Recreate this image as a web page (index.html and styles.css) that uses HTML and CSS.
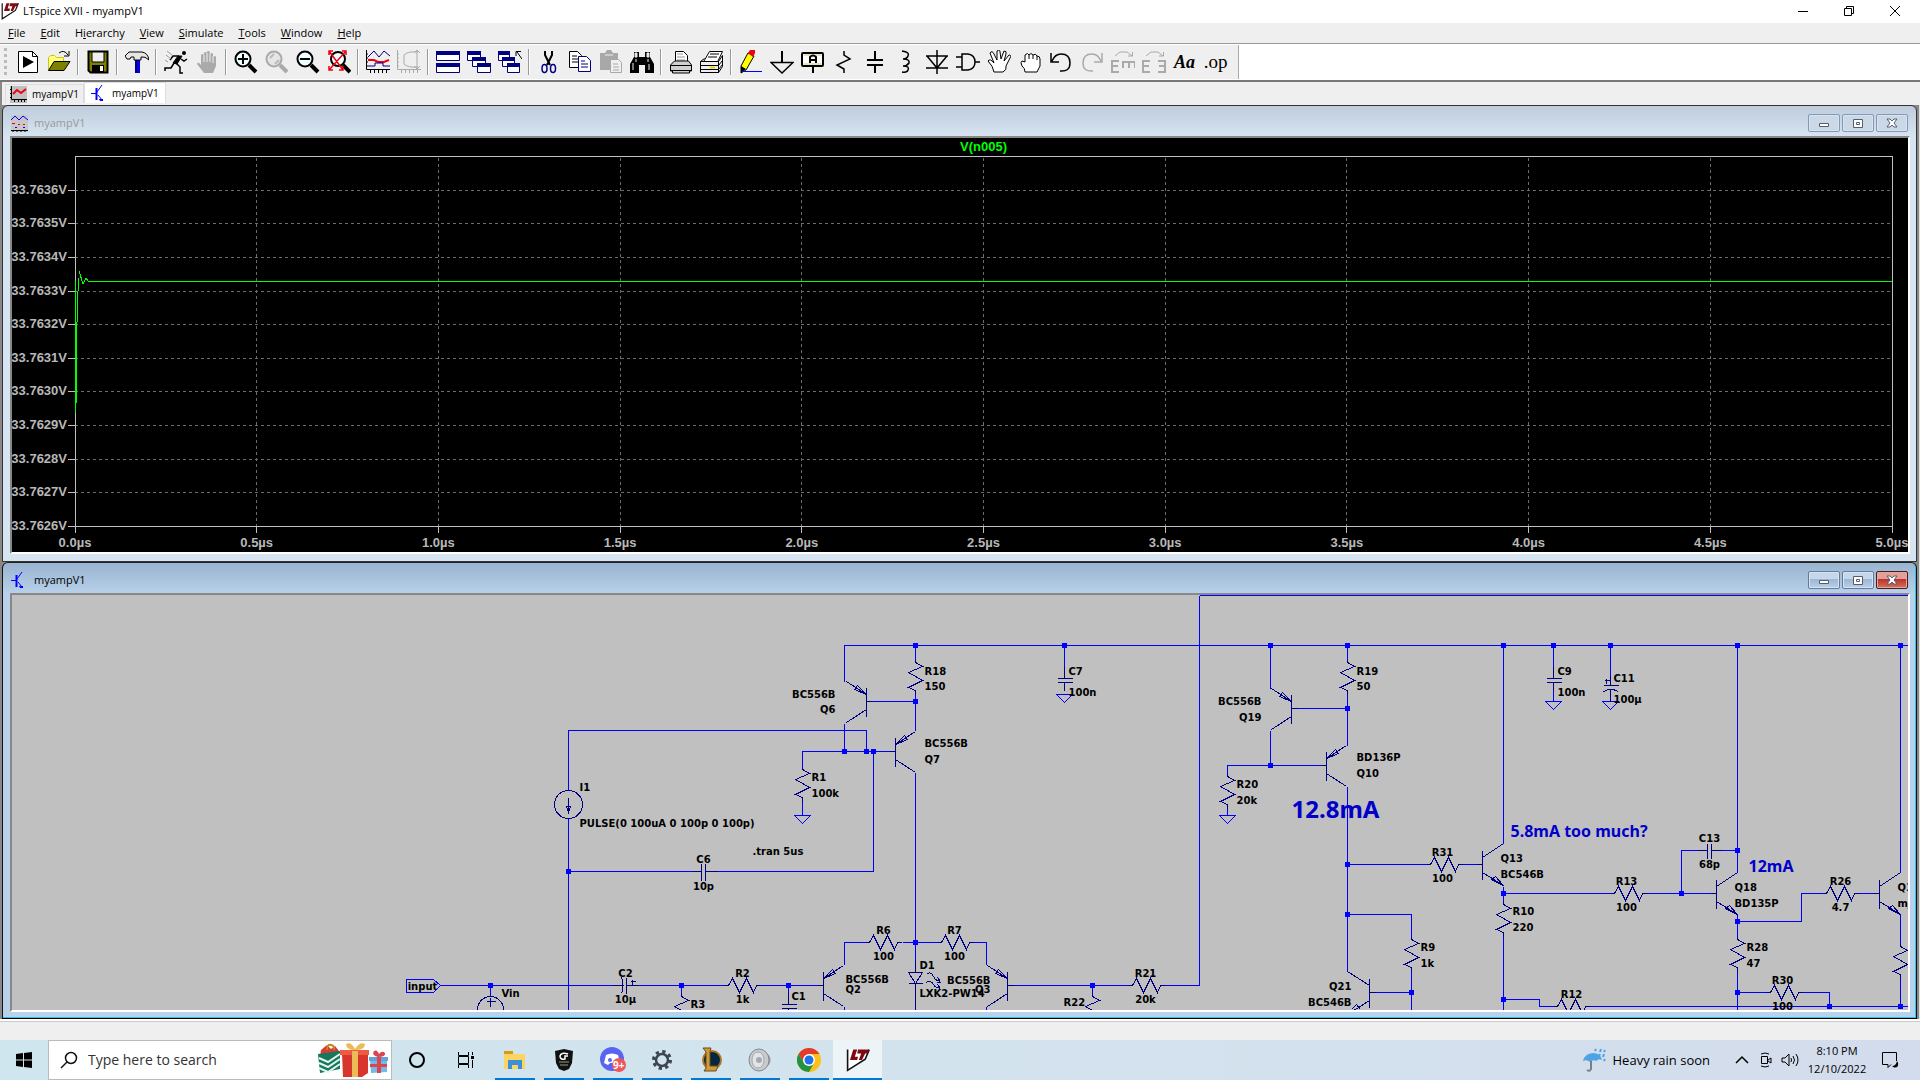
FILE: index.html
```html
<!DOCTYPE html>
<html lang="en">
<head>
<meta charset="utf-8">
<title>LTspice XVII - myampV1</title>
<link rel="stylesheet" href="styles.css">
</head>
<body>
<header class="titlebar">
  <svg class="logo" viewBox="0 0 30 30" width="18" height="20"><path d="M2 2V28L24 14 29 2" fill="#fff" stroke="#111" stroke-width="2"/><path d="M9 2h5l-3 9h4l-1 4H5zM15 2h14l-2 5h-3l-4 8h-4l3-8h-5z" fill="#7f0a10"/></svg>
  <h1>LTspice XVII - myampV1</h1>
  <div class="caption">
    <button aria-label="Minimize"><svg width="12" height="12"><path d="M1 6.500H11" stroke="#000"/></svg></button>
    <button aria-label="Restore"><svg width="12" height="12" fill="none" stroke="#000"><path d="M1.500 3.500h7v7h-7zM3.500 3V1.500h7v7H9"/></svg></button>
    <button aria-label="Close"><svg width="12" height="12"><path d="M1 1L11 11M11 1L1 11" stroke="#000"/></svg></button>
  </div>
</header>
<nav class="menu">
  <button><u>F</u>ile</button><button><u>E</u>dit</button><button>H<u>i</u>erarchy</button><button><u>V</u>iew</button><button><u>S</u>imulate</button><button><u>T</u>ools</button><button><u>W</u>indow</button><button><u>H</u>elp</button>
</nav>
<div class="toolrow">
<div class="toolbar">
  <span class="grip"></span>
  <button aria-label="Run"><svg viewBox="0 0 24 24"><path d="M2.500 1.500h14l5 5v16h-19z" fill="#fff" stroke="#000"/><path d="M16.500 1.500v5h5" fill="none" stroke="#000"/><path d="M7 6l11 6-11 6z"/></svg></button>
  <button aria-label="Open"><svg viewBox="0 0 24 24"><path d="M1.500 20V7.500l2-2h4l2 2h7V12" fill="#ffff80" stroke="#ccc600"/><path d="M1.500 20.500L7 11.500h16L17 20.500z" fill="#808000" stroke="#000"/><path d="M12 3q5-4 9 2M22 1v5h-5" fill="none" stroke="#000"/></svg></button>
  <i></i>
  <button aria-label="Save"><svg viewBox="0 0 24 24"><path d="M2.500 1.500h19v21h-17l-2-2z" fill="#808000" stroke="#000" stroke-width="2"/><path d="M6 2h12v10H6z" fill="#efefef" stroke="#000"/><path d="M6 15h12v7H6z"/><path d="M14 16h3v5h-3z" fill="#fff"/></svg></button>
  <i></i>
  <button aria-label="Control panel"><svg viewBox="0 0 24 24"><path d="M10 9h5v14h-5z" fill="#0000e0"/><path d="M10 9h2v14h-2z" fill="#000080"/><path d="M0 6l4-4h13q6 1 7 8-4-4-8-3v3H9V7H6l-1 2H2z" fill="#e6e6e6" stroke="#000"/></svg></button>
  <i></i>
  <button aria-label="Start simulation"><svg viewBox="0 0 24 24" fill="none" stroke="#000"><circle cx="20" cy="3" r="2" fill="#000" stroke="none"/><path d="M14 6l4 0-5 8-4-1z" fill="#000"/><path d="M15 6L9 6 6 10M17 9l3 2 3-2M12 13l4 4v6h3M10 13l-3 5H1v3" stroke-width="1.500"/><path d="M3 1l5 4M2 5l5 4M1 10l3 2" stroke="#999"/></svg></button>
  <button aria-label="Halt"><svg viewBox="0 0 24 24"><path d="M6 16V5q1-2 3 0V3q1-2 3 0V2q1-2 3 0v2q2-2 3 0v3q2-2 3 0v9l-3 7H9L2 14q1-3 4 1z" fill="#aaa"/><path d="M9 5v7M12 3v9M15 3v9M18 6v7" stroke="#efefef"/></svg></button>
  <i></i>
  <button aria-label="Zoom in"><svg viewBox="0 0 24 24"><circle cx="9" cy="9" r="7.500" fill="#eff" stroke="#000" stroke-width="2"/><path d="M15 15l7 7" stroke="#000" stroke-width="4"/><path d="M4 9h10M9 4v10" stroke="#000" stroke-width="2"/></svg></button>
  <button aria-label="Pan"><svg viewBox="0 0 24 24"><circle cx="9" cy="9" r="7.500" fill="#e6e6e6" stroke="#aaa" stroke-width="2"/><path d="M15 15l7 7" stroke="#aaa" stroke-width="4"/><path d="M5 8l4-4M14 10l-4 4" stroke="#bbb" stroke-width="2"/></svg></button>
  <button aria-label="Zoom out"><svg viewBox="0 0 24 24"><circle cx="9" cy="9" r="7.500" fill="#eff" stroke="#000" stroke-width="2"/><path d="M15 15l7 7" stroke="#000" stroke-width="4"/><path d="M4 9h10" stroke="#000" stroke-width="2"/></svg></button>
  <button aria-label="Zoom to fit"><svg viewBox="0 0 24 24"><circle cx="11" cy="9" r="7" fill="#eff" stroke="#000" stroke-width="2"/><path d="M16 15l7 7" stroke="#000" stroke-width="4"/><path d="M2 1L16 20M19 1L2 20M2 5V1h4M15 1h4v4M2 16v4h4M12 20h4v-4" fill="none" stroke="#f00010" stroke-width="1.500"/></svg></button>
  <i></i>
  <button aria-label="Autorange"><svg viewBox="0 0 24 24" fill="none"><path d="M.5 0V19.500H24M4.500 19v4M8.500 19v4M12.500 19v4M16.500 19v4M20.500 19v4M0 4h2M0 8h2M0 12h2M0 16h2" stroke="#000"/><path d="M2 7l6-6 5 6 5-6 6 5" stroke="#000080"/><path d="M2 10h6l4 2h6l5-2" stroke="#f00010" stroke-width="2"/><path d="M2 16h7v-3h8v3h7" stroke="#000080"/></svg></button>
  <button aria-label="Plot settings"><svg viewBox="0 0 24 24" fill="none" stroke="#aaa"><path d="M.5 0V19.500H24M4.500 19v4M8.500 19v4M12.500 19v4M16.500 19v4M20.500 19v4M0 4h2M0 8h2M0 12h2M0 16h2M7 5q4-4 14-3M7 14q4 4 14 3M7 5v9M20 0v19M17 3l3-3 3 3M17 16l3 3 3-3"/></svg></button>
  <i></i>
  <button aria-label="Tile windows"><svg viewBox="0 0 24 24"><path d="M.5 1.500h23v9H.5zM.5 13.500h23v9H.5z" fill="#fff" stroke="#000080"/><path d="M0 1h24v4H0zM0 13h24v4H0z" fill="#000080"/></svg></button>
  <button aria-label="Cascade windows"><svg viewBox="0 0 24 24"><g fill="#fff" stroke="#000080"><path d="M.5 1.500h13v9H.5z"/><path d="M5.500 7.500h13v9h-13z"/><path d="M10.500 13.500h13v9h-13z"/></g><path d="M0 1h14v4H0zM5 7h14v4H5zM10 13h14v4H10z" fill="#000080"/></svg></button>
  <button aria-label="Close all windows"><svg viewBox="0 0 24 24"><g fill="#fff" stroke="#000080"><path d="M.5 1.500h11v9H.5z"/><path d="M4.500 7.500h12v9h-12z"/><path d="M9.500 13.500h12v9h-12z"/></g><path d="M0 1h12v4H0zM4 7h13v4H4zM9 13h13v4H9z" fill="#000080"/><path d="M24 9l-5-7M18 6V1.500h5" fill="none" stroke="#000"/></svg></button>
  <i></i>
  <button aria-label="Cut"><svg viewBox="0 0 24 24" fill="none"><path d="M8 1v4l5 10M15 1v4l-5 10" stroke="#000" stroke-width="2"/><ellipse cx="7.500" cy="18.500" rx="2.500" ry="4" stroke="#000080" stroke-width="1.500"/><ellipse cx="16" cy="18.500" rx="2.500" ry="4" stroke="#000080" stroke-width="1.500"/></svg></button>
  <button aria-label="Copy"><svg viewBox="0 0 24 24" fill="#fff"><path d="M1.500 1.500h8l4 4v12h-12z" stroke="#000"/><path d="M4 6h5M4 9h7M4 12h7" stroke="#000"/><path d="M10.500 6.500h8l4 4v11h-12z" stroke="#000080"/><path d="M13 11h4M13 14h7M13 17h7" stroke="#000080"/></svg></button>
  <button aria-label="Paste"><svg viewBox="0 0 24 24"><path d="M1 3h5l2-3h4l2 3h5v17H1z" fill="#a8a8a8"/><path d="M6 5h8" stroke="#efefef"/><path d="M11.500 9.500h8l3 3v10h-11z" fill="#efefef" stroke="#a8a8a8"/><path d="M14 14h5M14 17h6M14 20h6" stroke="#a8a8a8"/></svg></button>
  <button aria-label="Find"><svg viewBox="0 0 24 24"><path d="M4 2h5v5h6V2h5v5l4 7v9h-9v-8h-6v8H0v-9l4-7z"/><path d="M5 3h2v4H5zM17 3h2v4h-2zM3 13v7M6 9v3M18 9v3M19 14v6" fill="#ddd" stroke="#eee"/></svg></button>
  <i></i>
  <button aria-label="Print"><svg viewBox="0 0 24 24" stroke="#000"><path d="M6.500 12V1.500h8l4 4V12" fill="#fff"/><path d="M8 4h6M8 7h8M8 10h8" stroke="#999"/><path d="M1.500 15l4-4h14l3 4v6h-2v2h-17v-2h-2z" fill="#d0d0d0"/><path d="M1 15.500h22M1 20.500h22"/></svg></button>
  <button aria-label="Print setup"><svg viewBox="0 0 24 24" stroke="#000"><path d="M4 11L9.500 1.500h13L18 11" fill="#fff"/><path d="M10 4h9M8 7h9"/><path d="M.5 11.500h18v11H.5zM18.500 11.500l4-6v11l-4 6zM.5 11.500l4-3M.5 15.500h18l4-5M.5 19.500h18l4-5" fill="#eee"/><path d="M10 17.500h5" stroke="#e5d500" stroke-width="2"/></svg></button>
  <i></i>
  <button aria-label="Draw wire"><svg viewBox="0 0 24 24"><path d="M9 3l6 3-8 14-5 3V16z" fill="#ff0" stroke="#000"/><path d="M9 3l2-3h5v3l-2 4z" fill="#f00010"/><path d="M2 16l5 3-5 4z"/><path d="M3 21.500h20" stroke="#00f"/></svg></button>
  <button aria-label="Ground"><svg viewBox="0 0 24 24" fill="none" stroke="#000"><path d="M12 1v11" stroke-width="2"/><path d="M1 12.500h22L12 23z" stroke-width="1.500"/></svg></button>
  <button aria-label="Label net"><svg viewBox="0 0 24 24"><rect x="1" y="3" width="21" height="13" rx="1" fill="#fff" stroke="#000" stroke-width="2"/><path d="M2.500 5h18M2.500 14h18" stroke="#d0c870"/><path d="M12 17v6M9 13V7q3-3 6 0v6M9 10h6" fill="none" stroke="#000" stroke-width="2"/></svg></button>
  <button aria-label="Resistor"><svg viewBox="0 0 24 24" fill="none" stroke="#000" stroke-width="1.500"><path d="M12 1v4l6 4L5 15l7 4v4"/></svg></button>
  <button aria-label="Capacitor"><svg viewBox="0 0 24 24" fill="none" stroke="#000" stroke-width="2"><path d="M12 1v9M4 10h16M4 15h16M12 15v8"/></svg></button>
  <button aria-label="Inductor"><svg viewBox="0 0 24 24" fill="none" stroke="#000" stroke-width="1.500"><path d="M8 1q8 1 6 5-1 3-5 3 7 0 6 4-2 3-6 3 7 0 5 4-1 3-6 2"/></svg></button>
  <button aria-label="Diode"><svg viewBox="0 0 24 24" fill="none" stroke="#000" stroke-width="1.500"><path d="M12 0v24M1 6h22M1 18h22M2 6l10 12L22 6"/></svg></button>
  <button aria-label="Component"><svg viewBox="0 0 24 24" fill="none" stroke="#000" stroke-width="1.500"><path d="M6 4h6q7 1 7 8t-7 8H6zM0 7h6M0 17h6M19 12h5"/></svg></button>
  <button aria-label="Move"><svg viewBox="0 0 24 24"><path d="M7 22q-1-6-6-11 2-3 6 2L3 3q2-3 4 1l3 6V1q3-2 3 1l1 7 3-8q3 0 2 3l-2 7 5-6q3 0 1 3l-4 8q1 4-3 6z" fill="#fff" stroke="#000"/></svg></button>
  <button aria-label="Drag"><svg viewBox="0 0 24 24"><path d="M7 22q0-4-3-6-2-4 0-5l3 1V5q3-3 4 0 2-3 4 0 3-2 4 1 3 0 3 3v7l-3 6z" fill="#fff" stroke="#000"/><path d="M11 5v4M15 5v4M19 6v4" stroke="#000"/></svg></button>
  <button aria-label="Undo"><svg viewBox="0 0 24 24" fill="none" stroke="#000" stroke-width="1.500"><path d="M2 3v9h8M3 11Q6 4 12 4q9 0 9 9t-10 8"/></svg></button>
  <button aria-label="Redo"><svg viewBox="0 0 24 24" fill="none" stroke="#aaa" stroke-width="1.500"><path d="M22 3v9h-8M21 11Q18 4 12 4q-9 0-9 9t10 8"/></svg></button>
  <button aria-label="Mirror"><svg viewBox="0 0 24 24" fill="none" stroke="#aaa"><path d="M4 6l5-4h7l5 4M17 6h4.500V2"/><path d="M8 11H1v11h7M1 16h6M12 18v-6h12v6M18 12v6" stroke-width="2"/></svg></button>
  <button aria-label="Rotate"><svg viewBox="0 0 24 24" fill="none" stroke="#aaa"><path d="M4 6l5-4h7l5 4M17 6h4.500V2"/><path d="M8 11H1v11h7M1 16h6M16 11h7v11h-7M17 16h6" stroke-width="2"/></svg></button>
  <button class="aa">Aa</button>
  <button class="op">.op</button>
</div>
</div>
<div class="tabs" role="tablist">
  <button role="tab"><svg width="17" height="17" viewBox="0 0 17 17"><path d="M0 0h17v17H0z" fill="#c0c0c0"/><path d="M1.500 0v13.500h15.500M0 3.500h2M0 7.500h2M0 11.500h2M4.500 13v3M8.500 13v3M11.500 13v3M14.500 13v3" fill="none" stroke="#000"/><path d="M3 8l4-4 4 3 5-4" fill="none" stroke="#f00010" stroke-width="2"/></svg>myampV1</button>
  <button role="tab" class="active" aria-selected="true"><svg width="17" height="17" viewBox="0 0 17 17" fill="none" stroke="#00f"><path d="M0 8.500h5M6 7l5-7M7 10l4 5"/><path d="M5.500 3v12" stroke-width="2"/><path d="M8 14h4v2h-3z" fill="#00f" stroke="none"/></svg>myampV1</button>
</div>
<main class="mdi">
  <section class="child inactive">
    <div class="child-title">
      <svg width="17" height="17" viewBox="0 0 17 17" fill="none"><path d="M0 0h17v17H0z" fill="#c8c8c8"/><path d="M0 5l4-4 4 4 4-4 5 4" stroke="#00f"/><path d="M1 8.500h3M7 9.500h2M12 9.500h2" stroke="#f00010"/><path d="M4 12.500h2M12 12.500h2" stroke="#00f"/><path d="M0 15.500h17M2 15v2M6 15v2M10 15v2M14 15v2" stroke="#000"/></svg>
      <h2>myampV1</h2>
      <button aria-label="Minimize"><svg width="12" height="10"><path d="M1.500 5.500h9v3h-9z" fill="#fff" stroke="#555c70"/></svg></button>
      <button aria-label="Restore"><svg width="12" height="10"><path d="M1.500 1.500h9v8h-9z" fill="#fff" stroke="#555c70"/><path d="M4.500 4.500h3v2h-3z" fill="none" stroke="#555c70"/></svg></button>
      <button aria-label="Close"><svg width="12" height="10"><path d="M1 1h3l2 2 2-2h3L8 5l3 4H8L6 7 4 9H1l3-4z" fill="#fff" stroke="#555c70"/></svg></button>
    </div>
    <div class="client plot">
      <svg class="chart" role="img" aria-label="V(n005) against time">
        <g class="grid">
          <line x1="10%" x2="10%" y1="2" y2="370"/><line x1="20%" x2="20%" y1="2" y2="370"/><line x1="30%" x2="30%" y1="2" y2="370"/><line x1="40%" x2="40%" y1="2" y2="370"/><line x1="50%" x2="50%" y1="2" y2="370"/><line x1="60%" x2="60%" y1="2" y2="370"/><line x1="70%" x2="70%" y1="2" y2="370"/><line x1="80%" x2="80%" y1="2" y2="370"/><line x1="90%" x2="90%" y1="2" y2="370"/>
          <line x2="100%" y1="34" y2="34"/><line x2="100%" y1="67" y2="67"/><line x2="100%" y1="101" y2="101"/><line x2="100%" y1="135" y2="135"/><line x2="100%" y1="168" y2="168"/><line x2="100%" y1="202" y2="202"/><line x2="100%" y1="235" y2="235"/><line x2="100%" y1="269" y2="269"/><line x2="100%" y1="303" y2="303"/><line x2="100%" y1="336" y2="336"/>
        </g>
        <g class="axes">
          <rect width="100%" height="370"/>
          <path d="M-7 34H0M-7 67H0M-7 101H0M-7 135H0M-7 168H0M-7 202H0M-7 235H0M-7 269H0M-7 303H0M-7 336H0M-7 370H0"/>
          <line x1="0" x2="0" y1="370" y2="377"/><line x1="10%" x2="10%" y1="370" y2="377"/><line x1="20%" x2="20%" y1="370" y2="377"/><line x1="30%" x2="30%" y1="370" y2="377"/><line x1="40%" x2="40%" y1="370" y2="377"/><line x1="50%" x2="50%" y1="370" y2="377"/><line x1="60%" x2="60%" y1="370" y2="377"/><line x1="70%" x2="70%" y1="370" y2="377"/><line x1="80%" x2="80%" y1="370" y2="377"/><line x1="90%" x2="90%" y1="370" y2="377"/><line x1="100%" x2="100%" y1="370" y2="377"/>
        </g>
        <g class="trace"><path d="M0 125V257M1 166V247M2 135V166M3 122V135M4 115L8 128 11 122 13 125"/><line x1="13" x2="100%" y1="125" y2="125"/></g>
        <g class="ylab"><text x="-8" y="38">33.7636V</text><text x="-8" y="71">33.7635V</text><text x="-8" y="105">33.7634V</text><text x="-8" y="139">33.7633V</text><text x="-8" y="172">33.7632V</text><text x="-8" y="206">33.7631V</text><text x="-8" y="239">33.7630V</text><text x="-8" y="273">33.7629V</text><text x="-8" y="307">33.7628V</text><text x="-8" y="340">33.7627V</text><text x="-8" y="374">33.7626V</text></g>
        <g class="xlab"><text x="0" y="391">0.0µs</text><text x="10%" y="391">0.5µs</text><text x="20%" y="391">1.0µs</text><text x="30%" y="391">1.5µs</text><text x="40%" y="391">2.0µs</text><text x="50%" y="391">2.5µs</text><text x="60%" y="391">3.0µs</text><text x="70%" y="391">3.5µs</text><text x="80%" y="391">4.0µs</text><text x="90%" y="391">4.5µs</text><text x="100%" y="391">5.0µs</text><text class="name" x="50%" y="-5">V(n005)</text></g>
      </svg>
    </div>
  </section>
  <section class="child current">
    <div class="child-title">
      <svg width="17" height="17" viewBox="0 0 17 17" fill="none" stroke="#00f"><path d="M0 8.500h5M6 7l5-7M7 10l4 5"/><path d="M5.500 3v12" stroke-width="2"/><path d="M8 14h4v2h-3z" fill="#00f" stroke="none"/></svg>
      <h2>myampV1</h2>
      <button aria-label="Minimize"><svg width="12" height="10"><path d="M1.500 5.500h9v3h-9z" fill="#fff" stroke="#555c70"/></svg></button>
      <button aria-label="Restore"><svg width="12" height="10"><path d="M1.500 1.500h9v8h-9z" fill="#fff" stroke="#555c70"/><path d="M4.500 4.500h3v2h-3z" fill="none" stroke="#555c70"/></svg></button>
      <button class="close" aria-label="Close"><svg width="12" height="10"><path d="M1 1h3l2 2 2-2h3L8 5l3 4H8L6 7 4 9H1l3-4z" fill="#fff" stroke="#555c70"/></svg></button>
    </div>
    <div class="client sheet">
      <svg class="schematic" width="1920" height="430" viewBox="11.500 594.500 1920 430" role="img" aria-label="Amplifier schematic">
        <defs>
          <path id="rv" d="M0-3V0L7 4-7 10 7 18-7 25 0 28V32"/>
          <path id="rh" d="M-4 0H0L4-7 11 7 18-7 25 7 28 0H32"/>
          <path id="pnp" d="M-6 0H0M0-14V15M20-20L0-7 9-16 12-12 0-7M0 8L20 21"/>
          <path id="npn" d="M-6 0H0M0-14V15M21-21L0-7M0 8L21 21 9 15 13 12 21 21"/>
          <path id="cap" d="M0-12V0M-7 0H8M-7 4H8M0 4V12"/>
          <path id="gnd" d="M-8 0H8L0 8Z"/>
          <path id="dot" d="M-2.500-2.500h5v5h-5z"/>
        </defs>
        <g class="wire">
          <path d="M1199 595H2600M1199 595V985H1164M844 681V645H2600M915 645V660M915 692V730M915 701H872M844 723V751M802 766V751H889M866 751V730H568V789M568 818V1100M568 871H691M717 871H873V751M802 800V815M915 772V960M869 942H844V964M902 942H937M973 942H986V964M440 985H612M636 985H724M760 985H817M490 985V996M681 985V993M788 985V995M1013 985H1128M1092 985V993M1064 645V666M1270 645V688M1270 730V765M1227 773V765H1320M1227 807V815M1347 645V659M1347 694V745M1297 708H1347M1347 786V971M1347 864H1426M1462 864H1476M1347 914H1411V936M1411 971V1100M1375 992H1411M1503 645V843M1503 886V901M1503 893H1610M1646 893H1710M1503 936V1100M1503 999H1539V1006H1553M1589 1006H2600M1553 645V666M1553 690V701M1610 645V675M1737 645V872M1681 893V850H1697M1721 850H1737M1737 914V936M1737 971V1100M1737 921H1801V893H1822M1858 893H1873M1900 645V872M1900 914V943M1900 978V1006M1737 992H1766M1802 992H1829V1006M844 1006V1020M986 1006V1020"/>
          <path d="M406 979H433L440 985 433 992H406Z"/>
          <use href="#gnd" x="802" y="815"/><use href="#gnd" x="1064" y="694"/><use href="#gnd" x="1227" y="815"/><use href="#gnd" x="1553" y="701"/><use href="#gnd" x="1610" y="701"/>
        </g>
        <g class="part">
          <use href="#rv" x="915" y="662"/><use href="#rv" x="802" y="769"/><use href="#rv" x="681" y="996"/><use href="#rv" x="1092" y="996"/><use href="#rv" x="1227" y="776"/><use href="#rv" x="1347" y="662"/><use href="#rv" x="1411" y="939"/><use href="#rv" x="1503" y="904"/><use href="#rv" x="1737" y="939"/><use href="#rv" x="1900" y="946"/>
          <use href="#rh" x="869" y="942"/><use href="#rh" x="941" y="942"/><use href="#rh" x="728" y="985"/><use href="#rh" x="1132" y="985"/><use href="#rh" x="1430" y="864"/><use href="#rh" x="1614" y="893"/><use href="#rh" x="1826" y="893"/><use href="#rh" x="1770" y="992"/><use href="#rh" x="1557" y="1006"/>
          <use href="#pnp" x="895" y="751"/><use href="#pnp" x="823" y="985"/><use href="#pnp" x="1326" y="765"/>
          <use href="#pnp" transform="translate(866 701) scale(-1 1)"/><use href="#pnp" transform="translate(1007 985) scale(-1 1)"/><use href="#pnp" transform="translate(1291 708) scale(-1 1)"/>
          <use href="#npn" x="1482" y="864"/><use href="#npn" x="1716" y="893"/><use href="#npn" x="1879" y="893"/>
          <path d="M1375 992H1369M1369 978V1007M1347 971L1369 985M1369 1000L1347 1014M1351 1009L1356 1004 1360 1009"/>
          <use href="#cap" x="1064" y="678"/><use href="#cap" x="1553" y="678"/><use href="#cap" x="788" y="1004"/>
          <path d="M1610 675V685M1603 685H1618M1603 691Q1610 687 1618 691M1610 689V701M1606 678V683M1604 680H1609"/>
          <path d="M691 871H701M701 863V880M705 863V880M705 871H717M1697 850H1707M1707 843V858M1711 843V858M1711 850H1721"/>
          <path d="M612 985H623M621 977Q624 985 621 993M626 977V993M626 985H638M632 979V984M630 981H635"/>
          <circle cx="568" cy="804" r="14"/><path d="M568 797V812M566 806H570L568 812Z"/>
          <circle cx="490" cy="1009" r="13"/><path d="M490 997V1006M486 1001H495"/>
          <path d="M915 960V972M908 972H922L915 983ZM908 983H922M915 983V1020M926 974Q930 970 933 976T940 979M937 977L940 982 936 982M926 982Q930 979 933 984T940 986M937 984L940 989"/>
        </g>
        <g class="dots">
          <use href="#dot" x="915" y="645"/><use href="#dot" x="1064" y="645"/><use href="#dot" x="1270" y="645"/><use href="#dot" x="1347" y="645"/><use href="#dot" x="1503" y="645"/><use href="#dot" x="1553" y="645"/><use href="#dot" x="1610" y="645"/><use href="#dot" x="1737" y="645"/><use href="#dot" x="1900" y="645"/><use href="#dot" x="915" y="701"/><use href="#dot" x="844" y="751"/><use href="#dot" x="866" y="751"/><use href="#dot" x="873" y="751"/><use href="#dot" x="568" y="871"/><use href="#dot" x="915" y="942"/><use href="#dot" x="490" y="985"/><use href="#dot" x="681" y="985"/><use href="#dot" x="788" y="985"/><use href="#dot" x="1092" y="985"/><use href="#dot" x="1270" y="765"/><use href="#dot" x="1347" y="708"/><use href="#dot" x="1347" y="864"/><use href="#dot" x="1347" y="914"/><use href="#dot" x="1411" y="992"/><use href="#dot" x="1503" y="893"/><use href="#dot" x="1503" y="999"/><use href="#dot" x="1681" y="893"/><use href="#dot" x="1737" y="850"/><use href="#dot" x="1737" y="921"/><use href="#dot" x="1737" y="992"/><use href="#dot" x="1829" y="1006"/><use href="#dot" x="1900" y="1006"/>
        </g>
        <g class="label">
          <text x="924" y="674">R18</text><text x="924" y="689">150</text><text x="924" y="746">BC556B</text><text x="924" y="762">Q7</text><text x="811" y="780">R1</text><text x="811" y="796">100k</text><text x="579" y="790">I1</text><text x="579" y="826">PULSE(0 100uA 0 100p 0 100p)</text><text x="752" y="854">.tran 5us</text><text x="919" y="968">D1</text><text x="845" y="982">BC556B</text><text x="845" y="992">Q2</text><text x="919" y="996">LXK2-PW14</text><text x="1068" y="674">C7</text><text x="1068" y="695">100n</text><text x="1063" y="1005">R22</text><text x="791" y="999">C1</text><text x="690" y="1007">R3</text><text x="501" y="996">Vin</text><text x="1236" y="787">R20</text><text x="1236" y="803">20k</text><text x="1356" y="674">R19</text><text x="1356" y="689">50</text><text x="1356" y="760">BD136P</text><text x="1356" y="776">Q10</text><text x="1500" y="861">Q13</text><text x="1500" y="877">BC546B</text><text x="1512" y="914">R10</text><text x="1512" y="930">220</text><text x="1420" y="950">R9</text><text x="1420" y="966">1k</text><text x="1557" y="674">C9</text><text x="1557" y="695">100n</text><text x="1613" y="681">C11</text><text x="1613" y="702">100µ</text><text x="1734" y="890">Q18</text><text x="1734" y="906">BD135P</text><text x="1897" y="890">Q19</text><text x="1897" y="906">mjl</text><text x="1746" y="950">R28</text><text x="1746" y="966">47</text>
        </g>
        <g class="label end">
          <text x="835" y="697">BC556B</text><text x="835" y="712">Q6</text><text x="990" y="983">BC556B</text><text x="990" y="992">Q3</text><text x="1261" y="704">BC556B</text><text x="1261" y="720">Q19</text><text x="1351" y="989">Q21</text><text x="1351" y="1005">BC546B</text>
        </g>
        <g class="label mid">
          <text x="703" y="862">C6</text><text x="703" y="889">10p</text><text x="883" y="933">R6</text><text x="883" y="959">100</text><text x="954" y="933">R7</text><text x="954" y="959">100</text><text x="625" y="976">C2</text><text x="625" y="1002">10µ</text><text x="742" y="976">R2</text><text x="742" y="1002">1k</text><text x="422" y="989">input</text><text x="1145" y="976">R21</text><text x="1145" y="1002">20k</text><text x="1442" y="855">R31</text><text x="1442" y="881">100</text><text x="1571" y="997">R12</text><text x="1626" y="884">R13</text><text x="1626" y="910">100</text><text x="1709" y="841">C13</text><text x="1709" y="867">68p</text><text x="1840" y="884">R26</text><text x="1840" y="910">4.7</text><text x="1782" y="983">R30</text><text x="1782" y="1009">100</text>
        </g>
        <g class="note"><text class="big" x="1291" y="817">12.8mA</text><text x="1510" y="836">5.8mA too much?</text><text x="1748" y="871">12mA</text></g>
      </svg>
    </div>
  </section>
</main>
<div class="status"></div>
<footer class="taskbar">
  <button class="start" aria-label="Start"><svg width="16" height="16"><path d="M0 2l7-1v6.500H0zM8 1l8-1v7.500H8zM0 8.500h7V15l-7-1zM8 8.500h8V16l-8-1z"/></svg></button>
  <label class="search">
    <svg width="18" height="18" fill="none" stroke="#111" stroke-width="1.500"><circle cx="11" cy="7" r="5.500"/><path d="M7 11L1 17"/></svg>
    <input type="text" placeholder="Type here to search" aria-label="Search">
    <svg class="gifts" width="70" height="36" viewBox="0 0 70 36"><path d="M3 8l6-5 4 4 4-3 4 5v6H2z" fill="#d93a35"/><path d="M0 12l22-3v18L2 31z" fill="#15785c"/><path d="M1 16l9 4 12-8M1 21l9 4 12-8M1 26l9 4 12-8" fill="none" stroke="#e8f4ee" stroke-width="2"/><path d="M9 8q0-6 4-5 4 1 3 5" fill="none" stroke="#b98b20" stroke-width="2"/><path d="M24 11h26v20l-6 4H25z" fill="#d8352d"/><path d="M22 8h29v5H22z" fill="#ef5a42"/><path d="M34 9h6v26h-6zM37 8q-9 0-9-6 5-3 9 5 5-8 10-5 0 6-10 6z" fill="#edbb55"/><path d="M52 17h17v13l-16 1z" fill="#76b9e6"/><path d="M51 15h19v4H51z" fill="#5fa5d8"/><path d="M59 15h4v16h-4zM52 22h17v3H52zM60 15q-7-2-4-6 3-2 5 3 3-4 6-1 1 4-7 4z" fill="#d94550"/></svg>
  </label>
  <button aria-label="Cortana"><svg width="18" height="18"><circle cx="9" cy="9" r="7" fill="none" stroke="#000" stroke-width="2"/></svg></button>
  <button aria-label="Task view"><svg width="18" height="18" fill="none" stroke="#000"><path d="M1.500 1v3.500h10V1M1.500 17v-3.500h10V17M1.500 5.500h10v7h-10zM15.500 1v3M15.500 9v8"/><path d="M14 5h3v3h-3z" fill="#000" stroke="none"/></svg></button>
  <button class="run" aria-label="File Explorer"><svg width="24" height="24"><path d="M1 3h8l2 3h11v15H1z" fill="#fcd462"/><path d="M1 3h9v3H1z" fill="#d99a18"/><path d="M5 12h14v9h-4v-4H9v4H5z" fill="#3d8fd8"/></svg></button>
  <button class="run" aria-label="G Hub"><svg width="24" height="24"><path d="M3 3l9-2 9 2-1 12-3 6-5 2-5-2-3-6z" fill="#111"/><path d="M16 6q-7-2-8 2 0 4 5 3V8h3" fill="none" stroke="#fff" stroke-width="1.500"/><path d="M7 14h10M8 17h8" stroke="#998"/></svg></button>
  <button class="run" aria-label="Discord, 9+ notifications"><svg width="28" height="28"><circle cx="13" cy="13" r="12" fill="#5865f2"/><path d="M7 9q6-3 12 0l2 8-4 2-2-2h-4l-2 2-4-2z" fill="#fff"/><circle cx="11" cy="14" r="2" fill="#5865f2"/><circle cx="20" cy="19" r="7" fill="#f0545c"/><text x="14" y="23" class="badge">9+</text></svg></button>
  <button class="run" aria-label="Settings"><svg width="22" height="22" fill="none" stroke="#3b4450"><circle cx="11" cy="11" r="6" stroke-width="2.500"/><circle cx="11" cy="11" r="8.500" stroke-width="3" stroke-dasharray="3.300 3.370"/></svg></button>
  <button class="run" aria-label="League of Legends"><svg width="26" height="26"><circle cx="14" cy="13" r="9" fill="#06283d" stroke="#a9772c" stroke-width="2"/><path d="M5 1h8l-1 3v15h8l-2 5H6l2-3V5z" fill="#d09a3b" stroke="#6b4a1a"/></svg></button>
  <button class="run" aria-label="Sound mixer"><svg width="24" height="24"><path d="M12 1l9 6q3 5 0 10l-9 6z" fill="#999ea5"/><ellipse cx="11" cy="12" rx="10" ry="11" fill="#c6cbd0" stroke="#888"/><ellipse cx="10" cy="12" rx="6" ry="8" fill="#e2e5e8" stroke="#aaa"/><circle cx="11" cy="12" r="3" fill="#a4aab0"/></svg></button>
  <button class="run" aria-label="Chrome"><svg width="24" height="24"><circle cx="12" cy="12" r="12" fill="#fbc116"/><path d="M12 6h10.400A12 12 0 001.600 6L7 15z" fill="#e33b2e"/><path d="M1.600 6L7 15 12 18l5-3-5 9A12 12 0 011.600 6z" fill="#229342"/><circle cx="12" cy="12" r="6" fill="#fff"/><circle cx="12" cy="12" r="4.500" fill="#1a73e8"/></svg></button>
  <button class="run on" aria-label="LTspice"><svg viewBox="0 0 30 30" width="24" height="26"><path d="M2 2V28L24 14 29 2" fill="#fff" stroke="#111" stroke-width="2"/><path d="M9 2h5l-3 9h4l-1 4H5zM15 2h14l-2 5h-3l-4 8h-4l3-8h-5z" fill="#7f0a10"/></svg></button>
  <div class="tray">
    <button class="weather"><svg width="24" height="24"><path d="M1 13q2-8 11-8 7 1 8 7-3-2-6 1-3-2-6 1-3-3-7-1z" fill="#4da3e6"/><path d="M9 13v8q-1 3-4 1" fill="none" stroke="#777f88" stroke-width="2"/><path d="M14 1l-1 2M19 1l-1 3M23 2l-1 2M18 6l-1 2M22 6l-1 3M23 11l-1 2" stroke="#4da3e6" stroke-width="2"/></svg>Heavy rain soon</button>
    <button aria-label="Hidden icons"><svg width="14" height="14" fill="none" stroke="#000" stroke-width="1.500"><path d="M1 10l6-6 6 6"/></svg></button>
    <button aria-label="Meet now"><svg width="14" height="16" fill="none" stroke="#000"><path d="M2.500 4.500h6v7h-6zM9 8l3-2v5l-3-2M2 2q4-2 8 0M2 14q4 2 8 0"/></svg></button>
    <button aria-label="Volume"><svg width="18" height="16" fill="none" stroke="#000"><path d="M1 6h3l4-4v12l-4-4H1zM10 6q1 2 0 4M12 4q3 4 0 8M15 2q4 6 0 12"/></svg></button>
    <div class="clock"><time>8:10 PM</time><time>12/10/2022</time></div>
    <button class="notif" aria-label="Notifications"><svg width="18" height="18" fill="none" stroke="#000"><path d="M10 13.500l-3 3v-3H1.500v-12h14V10"/><path d="M16 10q-1 5-5 5 3 3 6 0 1-3-1-5z" fill="#000" stroke="none"/></svg></button>
  </div>
</footer>
</body>
</html>
```
FILE: styles.css
```css
* { box-sizing: border-box; }
body {
  margin: 0;
  height: 100vh;
  display: flex;
  flex-direction: column;
  overflow: hidden;
  background: #efefef;
  color: #000;
  font: 11px/16px "Open Sans", "Noto Sans", sans-serif;
}
button {
  margin: 0;
  padding: 0;
  border: 0;
  background: none;
  color: inherit;
  font: inherit;
}
svg { display: block; flex: none; }
h1, h2 { margin: 0; font: inherit; }

.titlebar {
  display: flex;
  align-items: center;
  gap: 4px;
  height: 23px;
  padding: 0 2px 2px 1px;
  background: #fff;
}
.titlebar h1 { flex: 1; }
.caption { display: flex; }
.caption button {
  width: 46px;
  height: 20px;
  display: grid;
  place-items: center;
}
.menu {
  display: flex;
  gap: 15px;
  height: 20px;
  padding-left: 8px;
}

.toolrow {
  height: 39px;
  padding: 1px 0;
  border-top: 1px solid #999;
  border-bottom: 2px solid #777;
  background: #fff;
  display: flex;
}
.toolbar {
  display: flex;
  align-items: center;
  padding-right: 7px;
  background: #efefef;
  border-right: 1px solid #aaa;
}
.toolbar button {
  width: 31px;
  height: 24px;
  display: grid;
  place-items: center;
}
.toolbar svg { width: 24px; height: 24px; }
.toolbar i {
  width: 2px;
  height: 26px;
  margin: 0 3px;
  border-left: 1px solid #999;
  border-right: 1px solid #fff;
}
.grip {
  width: 3px;
  height: 28px;
  margin: 0 5px 0 4px;
  background: repeating-linear-gradient(#bbb 0 3px, #efefef 3px 6px);
}
.toolbar .aa { font: italic bold 18px/24px "Liberation Serif", serif; }
.toolbar .op { font: 19px/24px "Liberation Serif", serif; }

.tabs {
  display: flex;
  align-items: flex-end;
  height: 23px;
  padding: 0 4px 2px 3px;
  border-left: 2px solid #888;
  font-size: 10px;
}
.tabs button {
  display: flex;
  align-items: center;
  gap: 5px;
  height: 19px;
  padding: 0 4px;
  border: 1px solid #ddd;
  border-bottom: 0;
}
.tabs .active {
  height: 21px;
  padding: 0 6px;
  gap: 4px;
  background: #fff;
}

.mdi {
  flex: 1;
  min-height: 0;
  display: flex;
  flex-direction: column;
  padding: 0 2px;
  border-right: 1px solid #e0e0e0;
  background: #888;
}
.child {
  display: flex;
  flex-direction: column;
  border: 1px solid #333;
  border-radius: 6px 6px 0 0;
  padding: 0 6px 7px 7px;
}
.inactive {
  height: 457px;
  background: linear-gradient(#bfccdb, #d7e4f2 31px);
}
.current {
  flex: 1;
  min-height: 0;
  padding-bottom: 6px;
  border-color: #222 #111 #000;
  background: linear-gradient(#99b4d1, #b9d1ea 31px);
  box-shadow: inset -1px -1px #2cc4e6;
}
.child-title {
  display: flex;
  align-items: center;
  gap: 2px;
  height: 30px;
  padding: 4px 2px 0 1px;
}
.child-title h2 { flex: 1; margin-left: 4px; }
.child-title button {
  width: 32px;
  height: 18px;
  display: grid;
  place-items: center;
  border: 1px solid #66799c;
  border-radius: 2px;
  background: linear-gradient(#c5d8ea 45%, #9db6d3 45%, #b9d1ea);
  box-shadow: inset 0 0 0 1px #d6e4f2;
}
.inactive .child-title { color: #999; }
.inactive .child-title button { background: #cbd8e6; border-color: #8797b5; }
.child-title .close {
  border-color: #4b1a1a;
  background: linear-gradient(#e0a097 45%, #b83325 45%, #d4705f);
  box-shadow: inset 0 0 0 1px #e5a8a0;
}
.client {
  flex: 1;
  min-height: 0;
  overflow: hidden;
  border: 2px solid #888;
  border-right-color: #fff;
  border-bottom-color: #fff;
}

.plot {
  background: #000;
  padding: 18px 16px 26px 63px;
}
.chart {
  width: 100%;
  height: 370px;
  overflow: visible;
  fill: none;
  shape-rendering: crispEdges;
}
.chart .grid { stroke: #6c6c6c; stroke-dasharray: 3 3; }
.chart .axes { stroke: #c0c0c0; }
.chart .trace { stroke: #0f0; }
.chart text {
  fill: #b8b8b8;
  font: bold 13px "Liberation Sans", sans-serif;
}
.ylab { text-anchor: end; }
.xlab { text-anchor: middle; }
.chart .name { fill: #0f0; }

.sheet { background: #c0c0c0; }
.schematic { fill: none; shape-rendering: crispEdges; }
.wire { stroke: #00f; }
.part { stroke: #000080; }
.dots { fill: #00f; }
.label { fill: #000; font: bold 10px "DejaVu Sans", sans-serif; }
.end { text-anchor: end; }
.mid { text-anchor: middle; }
.note { fill: #0000c8; font: bold 16px "Noto Sans", sans-serif; }
.big { font-size: 24px; }

.status {
  height: 21px;
  border-top: 2px solid #fff;
  box-shadow: inset 0 1px #ccc;
}

.taskbar {
  display: flex;
  align-items: stretch;
  height: 40px;
  background: linear-gradient(90deg, #cfe6ee, #d3e3ee 50%, #d3dcec);
  font-size: 13px;
}
.taskbar button {
  width: 49px;
  display: grid;
  place-items: center;
}
.taskbar .start { width: 48px; }
.search {
  width: 344px;
  display: flex;
  align-items: center;
  gap: 10px;
  padding: 0 3px 0 11px;
  border: 1px solid #bbb;
  background: #fff;
}
.search input {
  flex: 1;
  min-width: 0;
  padding: 0;
  border: 0;
  outline: 0;
  font: 14px/20px "Open Sans", sans-serif;
}
.search input::placeholder { color: #333; opacity: 1; }
.taskbar .run {
  background: linear-gradient(#0078d7, #0078d7) center bottom / 40px 2px no-repeat;
}
.taskbar .on {
  background: linear-gradient(#0078d7, #0078d7) bottom / 100% 2px no-repeat #ecf4f8;
}
.badge { font: bold 10px "Open Sans", sans-serif; fill: #fff; }
.tray {
  margin-left: auto;
  display: flex;
  align-items: center;
  padding-right: 12px;
}
.tray button { width: 24px; }
.tray .weather {
  width: auto;
  display: flex;
  align-items: center;
  gap: 7px;
  margin-right: 20px;
}
.clock {
  width: 70px;
  display: flex;
  flex-direction: column;
  align-items: center;
  font-size: 11px;
  line-height: 18px;
}
.tray .notif { width: 36px; }
```
